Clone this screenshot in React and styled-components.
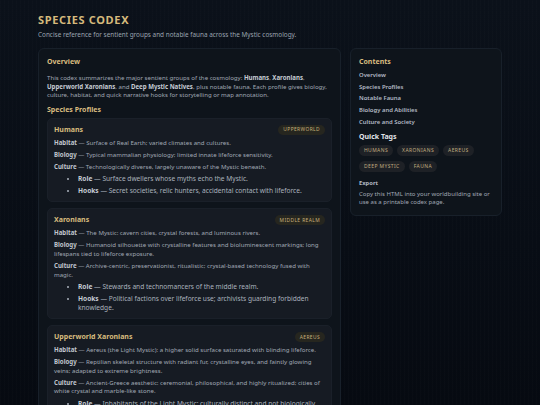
import styled, { createGlobalStyle } from 'styled-components'

const GlobalStyle = createGlobalStyle`
  html, body {
    margin: 0;
    padding: 0;
  }
  body {
    min-height: 405px;
    background-color: #070c14;
    background-image:
      repeating-linear-gradient(90deg, rgba(255,255,255,0.012) 0 1px, transparent 1px 4px),
      linear-gradient(180deg, #0b111a 0%, #080d15 60%, #060a11 100%);
    font-family: "Noto Sans", "Open Sans", sans-serif;
    color: #a3abb7;
  }
`;

const species = [
  {
    name: 'Humans',
    tag: 'Upperworld',
    facts: [
      ['Habitat', 'Surface of Real Earth; varied climates and cultures.'],
      ['Biology', 'Typical mammalian physiology; limited innate lifeforce sensitivity.'],
      ['Culture', 'Technologically diverse, largely unaware of the Mystic beneath.'],
    ],
    notes: [
      ['Role', 'Surface dwellers whose myths echo the Mystic.'],
      ['Hooks', 'Secret societies, relic hunters, accidental contact with lifeforce.'],
    ],
  },
  {
    name: 'Xaronians',
    tag: 'Middle Realm',
    facts: [
      ['Habitat', 'The Mystic: cavern cities, crystal forests, and luminous rivers.'],
      ['Biology', 'Humanoid silhouette with crystalline features and bioluminescent markings; long lifespans tied to lifeforce exposure.'],
      ['Culture', 'Archive-centric, preservationist, ritualistic; crystal-based technology fused with magic.'],
    ],
    notes: [
      ['Role', 'Stewards and technomancers of the middle realm.'],
      ['Hooks', 'Political factions over lifeforce use; archivists guarding forbidden knowledge.'],
    ],
  },
  {
    name: 'Upperworld Xaronians',
    tag: 'Aereus',
    facts: [
      ['Habitat', 'Aereus (the Light Mystic): a higher solid surface saturated with blinding lifeforce.'],
      ['Biology', 'Reptilian skeletal structure with radiant fur, crystalline eyes, and faintly glowing veins; adapted to extreme brightness.'],
      ['Culture', 'Ancient-Greece aesthetic: ceremonial, philosophical, and highly ritualized; cities of white crystal and marble-like stone.'],
    ],
    notes: [
      ['Role', 'Inhabitants of the Light Mystic; culturally distinct and not biologically related to the Xaronians below.'],
      ['Hooks', 'Pilgrimages to the light, oracles, and blinding trials.'],
    ],
  },
];

const contents = ['Overview', 'Species Profiles', 'Notable Fauna', 'Biology and Abilities', 'Culture and Society'];
const tags = ['Humans', 'Xaronians', 'Aereus', 'Deep Mystic', 'Fauna'];

const App = () => {
  return (
    <>
      <GlobalStyle />
      <Page>
        <Header>
          <Title>Species Codex</Title>
          <Subtitle>Concise reference for sentient groups and notable fauna across the Mystic cosmology.</Subtitle>
        </Header>
        <Layout>
          <Panel>
            <SectionTitle>Overview</SectionTitle>
            <Intro>
              This codex summarizes the major sentient groups of the cosmology: <b>Humans</b>, <b>Xaronians</b>,{' '}
              <b>Upperworld Xaronians</b>, and <b>Deep Mystic Natives</b>, plus notable fauna. Each profile gives biology,
              culture, habitat, and quick narrative hooks for storytelling or map annotation.
            </Intro>
            <SectionTitle $top>Species Profiles</SectionTitle>
            <CardList>
              {species.map((s) => (
                <SpeciesCard key={s.name}>
                  <CardHead>
                    <SpeciesName>{s.name}</SpeciesName>
                    <Badge>{s.tag}</Badge>
                  </CardHead>
                  {s.facts.map(([k, v]) => (
                    <Fact key={k}>
                      <b>{k}</b> — {v}
                    </Fact>
                  ))}
                  <Notes>
                    {s.notes.map(([k, v]) => (
                      <li key={k}>
                        <b>{k}</b> — {v}
                      </li>
                    ))}
                  </Notes>
                </SpeciesCard>
              ))}
            </CardList>
          </Panel>
          <Sidebar>
            <SectionTitle>Contents</SectionTitle>
            <TocList>
              {contents.map((c) => (
                <li key={c}>{c}</li>
              ))}
            </TocList>
            <SideHeading>Quick Tags</SideHeading>
            <TagRow>
              {tags.map((t) => (
                <Tag key={t}>{t}</Tag>
              ))}
            </TagRow>
            <SmallLabel>Export</SmallLabel>
            <SideText>Copy this HTML into your worldbuilding site or use as a printable codex page.</SideText>
          </Sidebar>
        </Layout>
      </Page>
    </>
  );
};

export default App;

const Page = styled.div`
  padding: 12px 38px 0;
  height: 405px;
  box-sizing: border-box;
  overflow: hidden;
`;

const Header = styled.header`
  display: flex;
  flex-direction: column;
  gap: 3px;
`;

const Title = styled.h1`
  margin: 0;
  font-size: 11px;
  line-height: 15px;
  letter-spacing: 0.06em;
  text-transform: uppercase;
  font-weight: 700;
  color: #d6ba7c;
`;

const Subtitle = styled.p`
  margin: 0;
  font-size: 6.4px;
  line-height: 9px;
  color: #9aa3af;
`;

const Layout = styled.div`
  display: grid;
  grid-template-columns: 1fr 152px;
  gap: 9px;
  margin-top: 9px;
  align-items: start;
`;

const Panel = styled.section`
  background: #0e141b;
  border: 1px solid #18202a;
  border-radius: 6px;
  padding: 8px 8px;
`;

const Sidebar = styled(Panel)`
  padding-bottom: 8px;
`;

const SectionTitle = styled.h2`
  margin: ${(p) => (p.$top ? '5px' : '0')} 0 0;
  font-size: 7px;
  line-height: 10px;
  font-weight: 700;
  color: #d8bc80;
`;

const Intro = styled.p`
  margin: 7px 0 0;
  font-size: 6.1px;
  line-height: 8.6px;
  color: #a0a8b4;

  b {
    color: #c6ccd5;
    font-weight: 700;
  }
`;

const CardList = styled.div`
  display: flex;
  flex-direction: column;
  gap: 6px;
  margin-top: 3px;
`;

const SpeciesCard = styled.article`
  background: #161b23;
  border: 1px solid #1a2029;
  border-radius: 5px;
  padding: 6px;
`;

const CardHead = styled.div`
  display: flex;
  justify-content: space-between;
  align-items: center;
  margin-bottom: 4px;
`;

const SpeciesName = styled.h3`
  margin: 0;
  font-size: 7px;
  line-height: 10px;
  font-weight: 700;
  color: #d6bb7e;
`;

const Badge = styled.span`
  background: #26261f;
  color: #c6b07b;
  font-size: 4.9px;
  letter-spacing: 0.08em;
  text-transform: uppercase;
  border-radius: 999px;
  padding: 2.5px 5px;
  line-height: 5px;
`;

const Fact = styled.p`
  margin: 3.4px 0 0;
  font-size: 6.1px;
  line-height: 8.6px;
  color: #a0a8b4;

  b {
    color: #c0c6cf;
    font-weight: 700;
  }
`;

const Notes = styled.ul`
  margin: 0;
  padding-left: 24px;
  font-size: 6.6px;
  line-height: 9px;
  color: #aab2bd;

  li {
    margin-top: 3px;
  }

  b {
    color: #c6ccd5;
    font-weight: 700;
  }
`;

const TocList = styled.ul`
  list-style: none;
  margin: 2px 0 0;
  padding: 0;

  li {
    font-size: 5.9px;
    line-height: 8px;
    font-weight: 600;
    color: #b3bac5;
    margin-top: 3.8px;
  }
`;

const SideHeading = styled.h3`
  margin: 6.5px 0 0;
  font-size: 7px;
  line-height: 10px;
  font-weight: 700;
  color: #e1e4e9;
`;

const TagRow = styled.div`
  display: flex;
  flex-wrap: wrap;
  gap: 4.4px 4px;
  margin-top: 2.6px;
`;

const Tag = styled.span`
  background: #1e2126;
  color: #c0ad80;
  font-size: 5px;
  letter-spacing: 0.08em;
  text-transform: uppercase;
  border-radius: 999px;
  padding: 3px 5px;
  line-height: 5.4px;
`;

const SmallLabel = styled.h4`
  margin: 6.6px 0 0;
  font-size: 5.8px;
  line-height: 8px;
  font-weight: 700;
  color: #b3bac5;
`;

const SideText = styled.p`
  margin: 3px 0 0;
  font-size: 6px;
  line-height: 8.4px;
  color: #a0a8b4;
`;
